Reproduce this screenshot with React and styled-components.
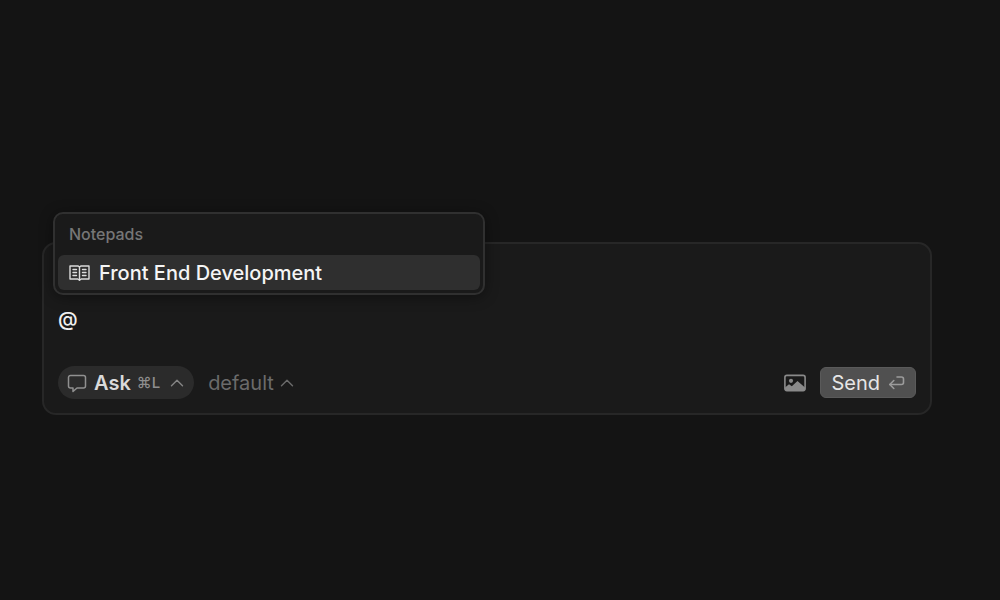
import React, { useState } from 'react';
import styled, { createGlobalStyle } from 'styled-components';

const GlobalStyle = createGlobalStyle`
  *, *::before, *::after { box-sizing: border-box; }
  body {
    margin: 0;
    background: #141414;
    font-family: Inter, "Liberation Sans", sans-serif;
    -webkit-font-smoothing: antialiased;
  }
  button, textarea { font: inherit; }
`;

const Page = styled.main`
  min-height: 100vh;
  padding: 242px 68px 24px 42px;
`;

const Composer = styled.form`
  position: relative;
  display: flex;
  flex-direction: column;
  gap: 27px;
  padding: 59px 14px 14px;
  background: #1a1a1a;
  border: 2px solid #272727;
  border-radius: 14px;
`;

const MentionMenu = styled.section`
  position: absolute;
  top: -32px;
  left: 9px;
  width: 432px;
  max-width: 100%;
  padding: 3px;
  background: #1a1a1a;
  border: 2px solid #303030;
  border-radius: 10px;
  box-shadow: 0 2px 14px rgba(0, 0, 0, 0.4);
`;

const MenuHeading = styled.h2`
  margin: 0;
  padding: 6px 11px 10px;
  color: #767676;
  font-size: 16px;
  font-weight: 500;
  line-height: 22px;
`;

const MenuItem = styled.button`
  display: flex;
  align-items: center;
  gap: 9px;
  width: 100%;
  height: 35px;
  padding: 0 11px;
  color: #f5f5f5;
  background: #2f2f2f;
  border: 0;
  border-radius: 6px;
  font-size: 20px;
  font-weight: 500;
  text-align: left;
`;

const Prompt = styled.textarea`
  display: block;
  width: 100%;
  height: 36px;
  padding: 4px 0;
  color: #f0f0f0;
  background: transparent;
  border: 0;
  outline: 0;
  resize: none;
  font-size: 20px;
  font-weight: 500;
  line-height: 24px;
`;

const Toolbar = styled.div`
  display: flex;
  align-items: center;
  justify-content: space-between;
`;

const Group = styled.div`
  display: flex;
  align-items: center;
  gap: 14px;
`;

const ModeButton = styled.button`
  display: flex;
  align-items: center;
  height: 33px;
  padding: 0 10px 0 9px;
  color: #dadada;
  background: #2b2b2b;
  border: 0;
  border-radius: 17px;
  font-size: 20px;
  font-weight: 600;
`;

const ModeName = styled.span`
  margin: 0 6px 0 7px;
`;

const Shortcut = styled.kbd`
  margin-right: 10px;
  color: #8e8e8e;
  font-family: Inter, "DejaVu Sans", sans-serif;
  font-size: 15px;
  font-weight: 500;
`;

const ModelButton = styled.button`
  display: flex;
  align-items: center;
  gap: 6px;
  padding: 0;
  color: #6b6b6b;
  background: none;
  border: 0;
  font-size: 20px;
  font-weight: 400;
`;

const IconButton = styled.button`
  display: flex;
  padding: 0;
  color: #8a8a8a;
  background: none;
  border: 0;
`;

const SendButton = styled.button`
  display: flex;
  align-items: center;
  gap: 8px;
  height: 31px;
  padding: 0 10px;
  color: #e6e6e6;
  background: #505050;
  border: 1px solid #5a5a5a;
  border-radius: 6px;
  font-size: 20px;
  font-weight: 400;
`;

const Icon = styled.svg`
  display: block;
  flex: none;
  color: ${(p) => p.$tone || 'inherit'};
  fill: none;
  stroke: currentColor;
  stroke-linecap: round;
  stroke-linejoin: round;
`;

const BookIcon = () => (
  <Icon $tone="#dcdcdc" width="21" height="18" viewBox="0 0 21 18" strokeWidth="1.4" aria-hidden="true">
    <path d="M1 2h8.2l1.3 1 1.3-1H20v13h-7.8l-1.7 1.3L8.8 15H1z" />
    <path d="M10.5 3v13" />
    <path d="M4 5.500h3.500M4 8.500h3.500M4 11.500h3.500M13.500 5.500H17M13.500 8.500H17M13.500 11.500H17" />
  </Icon>
);

const CommentIcon = () => (
  <Icon $tone="#909090" width="20" height="20" viewBox="0 0 20 20" strokeWidth="1.5" aria-hidden="true">
    <path d="M3.500 2.500h13A2 2 0 0 1 18.500 4.500v8.500a2 2 0 0 1-2 2H10L6 18.500v-3.500H3.500a2 2 0 0 1-2-2V4.500a2 2 0 0 1 2-2z" />
  </Icon>
);

const ChevronUp = ({ tone }) => (
  <Icon $tone={tone} width="14" height="10" viewBox="0 0 14 10" strokeWidth="1.4" aria-hidden="true">
    <path d="M1.500 7.800 7 2.200l5.500 5.600" />
  </Icon>
);

const ImageIcon = () => (
  <Icon width="22" height="18" viewBox="0 0 22 18" aria-hidden="true">
    <rect x="0.9" y="1.400" width="20.200" height="15.200" rx="2" strokeWidth="1.600" />
    <circle cx="7" cy="6.800" r="2.100" fill="currentColor" stroke="none" />
    <path d="M1 13.500 5 10.200l2.800 2.100L13.500 7l7.500 6.500V15a1.500 1.500 0 0 1-1.500 1.500h-17A1.500 1.500 0 0 1 1 15z" fill="currentColor" stroke="none" />
  </Icon>
);

const ReturnIcon = () => (
  <Icon $tone="#9c9c9c" width="17" height="16" viewBox="0 0 17 16" strokeWidth="1.6" aria-hidden="true">
    <path d="M9 2h4.500a2 2 0 0 1 2 2v3.500a2 2 0 0 1-2 2H1.800" />
    <path d="M5.800 5.500l-4 4 4 4" />
  </Icon>
);

export default function App() {
  const [text, setText] = useState('@');
  return (
    <>
      <GlobalStyle />
      <Page>
        <Composer onSubmit={(e) => e.preventDefault()}>
          <MentionMenu>
            <MenuHeading>Notepads</MenuHeading>
            <MenuItem type="button">
              <BookIcon />
              Front End Development
            </MenuItem>
          </MentionMenu>
          <Prompt
            aria-label="Message"
            rows={1}
            value={text}
            onChange={(e) => setText(e.target.value)}
          />
          <Toolbar>
            <Group>
              <ModeButton type="button">
                <CommentIcon />
                <ModeName>Ask</ModeName>
                <Shortcut>⌘L</Shortcut>
                <ChevronUp tone="#858585" />
              </ModeButton>
              <ModelButton type="button">
                default
                <ChevronUp tone="#6b6b6b" />
              </ModelButton>
            </Group>
            <Group>
              <IconButton type="button" aria-label="Attach image">
                <ImageIcon />
              </IconButton>
              <SendButton type="submit">
                Send
                <ReturnIcon />
              </SendButton>
            </Group>
          </Toolbar>
        </Composer>
      </Page>
    </>
  );
}
